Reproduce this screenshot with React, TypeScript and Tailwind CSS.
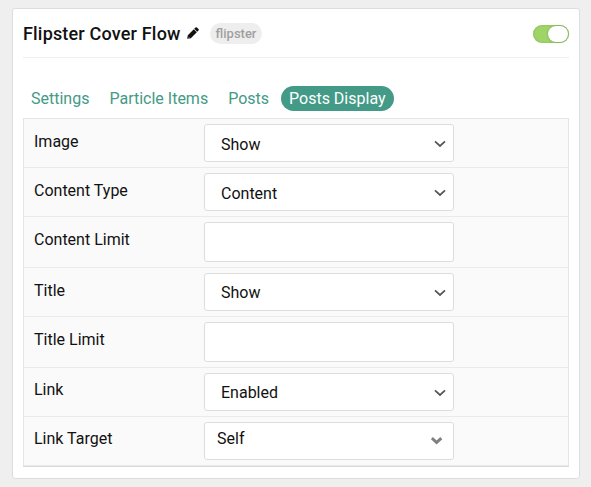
type Row = {
  label: string;
  kind: "select" | "input" | "selectize";
  value?: string;
  labelPad: string;
  valuePad?: string;
};

const tabs = ["Settings", "Particle Items", "Posts", "Posts Display"];

const rows: Row[] = [
  { label: "Image", kind: "select", value: "Show", labelPad: "pt-1.5", valuePad: "pt-2" },
  { label: "Content Type", kind: "select", value: "Content", labelPad: "pt-1.5", valuePad: "pt-2" },
  { label: "Content Limit", kind: "input", labelPad: "pt-1.5" },
  { label: "Title", kind: "select", value: "Show", labelPad: "pt-1.5", valuePad: "pt-[7px]" },
  { label: "Title Limit", kind: "input", labelPad: "pt-1.5" },
  { label: "Link", kind: "select", value: "Enabled", labelPad: "pt-[5px]", valuePad: "pt-[7px]" },
  { label: "Link Target", kind: "selectize", value: "Self", labelPad: "pt-[5px]", valuePad: "pt-1" },
];

function Pencil() {
  return (
    <svg className="ml-[6px] h-3 w-3" viewBox="0 0 12 12">
      <path
        fill="#111"
        d="M.2 11.800 .8 8.200 6.800 2.200 9.800 5.200 3.800 11.200zM7.200 1.800 8.500.5q.7-.6 1.400 0l1.600 1.600q.6.7 0 1.400L10.200 4.800z"
      />
      <path stroke="#fff" strokeWidth=".6" d="M1.300 9.800 2.200 10.700" />
    </svg>
  );
}

function Field({ row }: { row: Row }) {
  if (row.kind === "input") {
    return <div className="h-10 w-[250px] rounded-[3px] border border-[#dddddd] bg-white" />;
  }
  if (row.kind === "selectize") {
    return (
      <div className="flex h-[38px] w-[250px] justify-between rounded-[3px] border border-[#dddddd] bg-white pl-3 pr-[10px]">
        <span className={`leading-6 ${row.valuePad}`}>{row.value}</span>
        <svg className="mt-[14px] h-2 w-3" viewBox="0 0 12 8" fill="none" stroke="#808080" strokeWidth="3">
          <path d="M.9 1.100 5.600 5.500 10.300 1.100" />
        </svg>
      </div>
    );
  }
  return (
    <div className="flex h-[38px] w-[250px] justify-between rounded-[3px] border border-[#dddddd] bg-white pl-4 pr-[7px]">
      <span className={`leading-6 ${row.valuePad}`}>{row.value}</span>
      <svg className="mt-[15px] h-2 w-3" viewBox="0 0 12 8" fill="none" stroke="#555" strokeWidth="1.7">
        <path d="M1 1.400 6 6 11 1.400" />
      </svg>
    </div>
  );
}

export default function App() {
  return (
    <div className="h-[487px] w-[591px] bg-[#efefef] pl-3 pt-2 font-['Roboto',sans-serif] text-[16px] text-[#111]">
      <div className="h-[471px] w-[568px] rounded-[3px] border border-[#dddddd] bg-white px-[10px]">
        <header className="flex h-[49px] items-center border-b border-[#eeeeee]">
          <h1 className="pt-px text-[18px] font-medium leading-6 tracking-[0.18px]">Flipster Cover Flow</h1>
          <Pencil />
          <span className="ml-[11px] h-[21px] rounded-full bg-[#eeeeee] px-[6px] text-[13px] font-medium leading-[21px] text-[#a0a0a0]">
            flipster
          </span>
          <div className="ml-auto mt-px flex h-[18px] w-9 items-center justify-end rounded-full bg-[#9fd468] pr-px shadow-[inset_0_0_2px_#7fae50]">
            <div className="h-4 w-5 rounded-full bg-white shadow-[0_0_2px_#6b8c48]" />
          </div>
        </header>
        <nav className="mt-7 flex h-[25px] gap-1 leading-[25px] text-[#439a86]">
          {tabs.map((tab) => (
            <span
              key={tab}
              className={tab === "Posts Display" ? "rounded-full bg-[#439a86] px-2 text-white" : "px-2"}
            >
              {tab}
            </span>
          ))}
        </nav>
        <div className="mt-[7px] border border-[#e5e5e5] border-b-[#e9e9e9] bg-[#fafafa] shadow-[0_1px_0_#d9d9d9]">
          {rows.map((row) => (
            <div key={row.label} className="flex border-b border-[#eaeaea] py-[5px] pl-[10px] last:border-b-0">
              <div className={`w-[170px] leading-6 ${row.labelPad}`}>{row.label}</div>
              <Field row={row} />
            </div>
          ))}
        </div>
      </div>
    </div>
  );
}
